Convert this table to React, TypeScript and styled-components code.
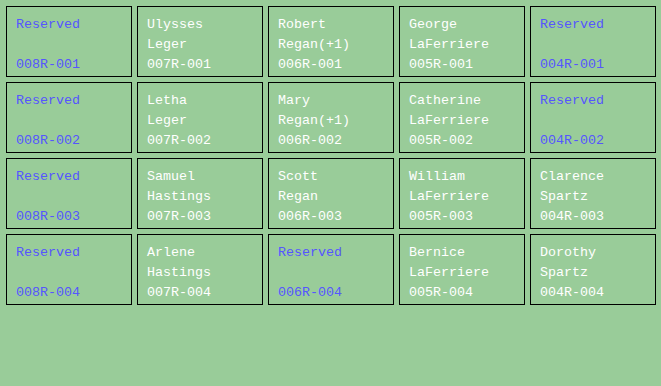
import React from "react";
import styled, { createGlobalStyle } from "styled-components";

type Slot = {
    first: string;
    last: string;
    code: string;
    reserved?: boolean;
};

const GlobalStyle = createGlobalStyle`
    html, body {
        margin: 0;
        padding: 0;
        background-color: #99cc99;
    }
`;

const Board = styled.div`
    & {
        display: grid;
        grid-template-columns: repeat(5, 126px);
        grid-auto-rows: 71px;
        column-gap: 5px;
        row-gap: 5px;
        padding: 6px;
        width: 661px;
        height: 386px;
        box-sizing: border-box;
        background-color: #99cc99;
        font-family: "Liberation Mono", monospace;
        font-size: 13.33px;
        line-height: 20px;
    }
`;

const Cell = styled.div<{ $reserved?: boolean }>`
    & {
        box-sizing: border-box;
        border: 1px solid #000000;
        padding: 8px 9px 0;
        display: flex;
        flex-direction: column;
        color: ${(p) => (p.$reserved ? "#5555ff" : "#ffffff")};
        white-space: nowrap;
    }
`;

const Line = styled.div`
    height: 20px;
`;

const cols = ["008R", "007R", "006R", "005R", "004R"];

const names: Record<string, [string, string][]> = {
    "007R": [
        ["Ulysses", "Leger"],
        ["Letha", "Leger"],
        ["Samuel", "Hastings"],
        ["Arlene", "Hastings"],
    ],
    "006R": [
        ["Robert", "Regan(+1)"],
        ["Mary", "Regan(+1)"],
        ["Scott", "Regan"],
        ["", ""],
    ],
    "005R": [
        ["George", "LaFerriere"],
        ["Catherine", "LaFerriere"],
        ["William", "LaFerriere"],
        ["Bernice", "LaFerriere"],
    ],
    "004R": [
        ["", ""],
        ["", ""],
        ["Clarence", "Spartz"],
        ["Dorothy", "Spartz"],
    ],
};

const slots: Slot[] = [];
for (let r = 0; r < 4; r++) {
    for (const c of cols) {
        const code = `${c}-00${r + 1}`;
        const who = names[c]?.[r];
        if (!who || !who[0]) {
            slots.push({ first: "Reserved", last: "", code, reserved: true });
        } else {
            slots.push({ first: who[0], last: who[1], code });
        }
    }
}

const App = () => {
    return (
        <>
            <GlobalStyle />
            <Board>
                {slots.map((s) => (
                    <Cell key={s.code} $reserved={s.reserved}>
                        <Line>{s.first}</Line>
                        <Line>{s.last}</Line>
                        <Line>{s.code}</Line>
                    </Cell>
                ))}
            </Board>
        </>
    );
};

export default App;
